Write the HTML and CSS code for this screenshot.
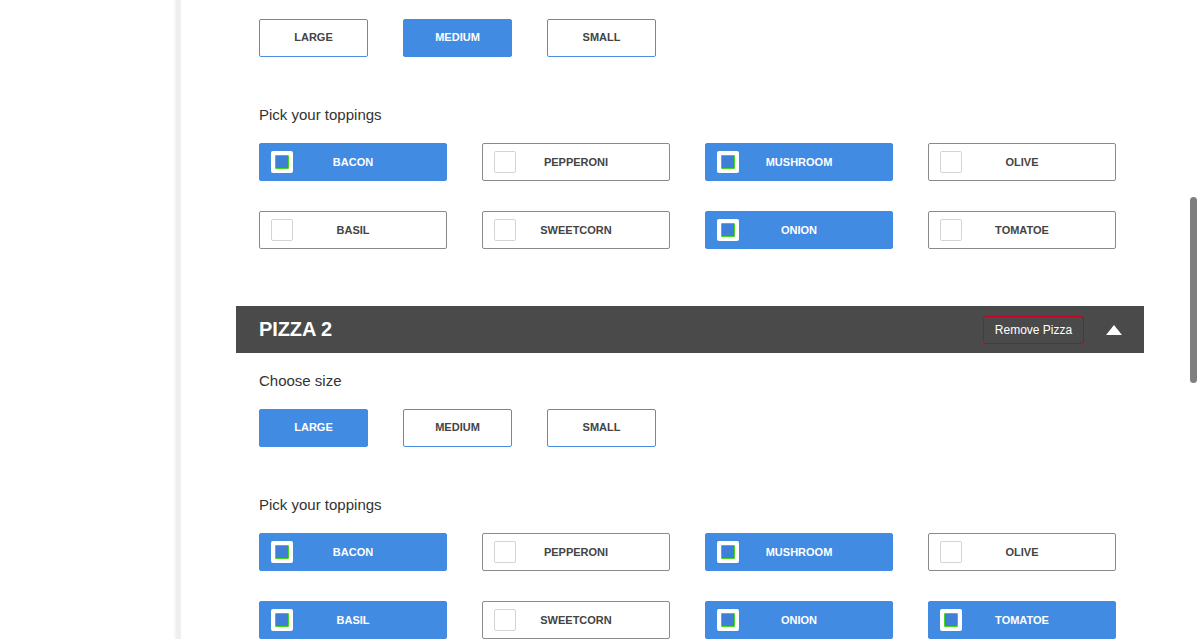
FILE: index.html
```html
<!DOCTYPE html>
<html>
<head>
<meta charset="utf-8">
<link rel="stylesheet" href="styles.css">
</head>
<body>
<div class="layout">
  <aside class="sidebar"></aside>
  <main class="main">
    <section class="pizza">
      <div class="body first">
        <div class="sizes">
          <button class="size">LARGE</button>
          <button class="size on">MEDIUM</button>
          <button class="size">SMALL</button>
        </div>
        <div class="label">Pick your toppings</div>
        <div class="toppings">
          <button class="top on"><span class="cb"></span><span class="tx">BACON</span></button>
          <button class="top"><span class="cb"></span><span class="tx">PEPPERONI</span></button>
          <button class="top on"><span class="cb"></span><span class="tx">MUSHROOM</span></button>
          <button class="top"><span class="cb"></span><span class="tx">OLIVE</span></button>
          <button class="top"><span class="cb"></span><span class="tx">BASIL</span></button>
          <button class="top"><span class="cb"></span><span class="tx">SWEETCORN</span></button>
          <button class="top on"><span class="cb"></span><span class="tx">ONION</span></button>
          <button class="top"><span class="cb"></span><span class="tx">TOMATOE</span></button>
        </div>
      </div>
    </section>
    <section class="pizza">
      <header class="head">
        <h2 class="title">PIZZA 2</h2>
        <button class="remove">Remove Pizza</button>
        <span class="caret"></span>
      </header>
      <div class="body">
        <div class="label size-label">Choose size</div>
        <div class="sizes">
          <button class="size on">LARGE</button>
          <button class="size">MEDIUM</button>
          <button class="size">SMALL</button>
        </div>
        <div class="label">Pick your toppings</div>
        <div class="toppings">
          <button class="top on"><span class="cb"></span><span class="tx">BACON</span></button>
          <button class="top"><span class="cb"></span><span class="tx">PEPPERONI</span></button>
          <button class="top on"><span class="cb"></span><span class="tx">MUSHROOM</span></button>
          <button class="top"><span class="cb"></span><span class="tx">OLIVE</span></button>
          <button class="top on"><span class="cb"></span><span class="tx">BASIL</span></button>
          <button class="top"><span class="cb"></span><span class="tx">SWEETCORN</span></button>
          <button class="top on"><span class="cb"></span><span class="tx">ONION</span></button>
          <button class="top on"><span class="cb"></span><span class="tx">TOMATOE</span></button>
        </div>
      </div>
    </section>
  </main>
</div>
<div class="scrollbar"></div>
</body>
</html>
```

FILE: styles.css
```css
html, body {
  margin: 0;
  padding: 0;
  background: #fff;
  height: 639px;
  overflow: hidden;
}
body {
  font-family: "Liberation Sans", Arial, Helvetica, sans-serif;
  color: #333;
}
.layout {
  display: flex;
  min-height: 639px;
}
.sidebar {
  width: 176px;
  flex: none;
  border-right: 5px solid #efefef;
  box-shadow: inset -2px 0 0 #f6f6f6;
}
.main {
  margin-left: 55px;
  width: 908px;
}
.body {
  padding: 0 28px 57px 23px;
}
.body.first {
  padding-top: 19px;
}
.sizes {
  display: flex;
  gap: 35px;
}
button {
  font-family: "Liberation Sans", Arial, Helvetica, sans-serif;
  cursor: pointer;
}
.size {
  width: 109px;
  height: 38px;
  border: 1px solid #4a8fe2;
  background: #fff;
  border-radius: 2px;
  font-size: 11px;
  font-weight: bold;
  color: #444;
  padding: 0 0 2px;
}
.size.on {
  background: #428be2;
  border-color: #428be2;
  color: #fff;
}
.label {
  font-size: 15px;
  color: #333;
  height: 16px;
  line-height: 16px;
  margin: 50px 0 20px;
}
.size-label {
  margin: 20px 0 20px;
}
.toppings {
  display: grid;
  grid-template-columns: repeat(4, 188px);
  column-gap: 35px;
  row-gap: 30px;
}
.top {
  height: 38px;
  padding: 0 11px 1px;
  border: 1px solid #8a8a8a;
  border-radius: 2px;
  background: #fff;
  display: grid;
  grid-template-columns: 22px 1fr 22px;
  align-items: center;
  font-size: 11px;
  font-weight: bold;
  color: #444;
}
.top .tx {
  text-align: center;
}
.cb {
  width: 22px;
  height: 22px;
  box-sizing: border-box;
  border: 1px solid #d4d4d4;
  border-radius: 2px;
  background: #fff;
  display: flex;
  align-items: center;
  justify-content: center;
}
.top.on {
  background: #428be2;
  border-color: #428be2;
  color: #fff;
}
.top.on .cb {
  border: none;
  border-radius: 2px;
}
.top.on .cb::after {
  content: "";
  width: 14px;
  height: 14px;
  box-sizing: border-box;
  background: #3f7fd8;
  border: 1px solid #44d81c;
  border-radius: 1px;
}
.head {
  height: 47px;
  background: #4a4a4a;
  display: flex;
  align-items: center;
  padding: 0 22px 0 23px;
}
.title {
  margin: 0;
  flex: 1;
  font-size: 20px;
  font-weight: bold;
  color: #fff;
  letter-spacing: -0.1px;
}
.remove {
  width: 101px;
  height: 28px;
  border: 1px solid #c8001f;
  border-radius: 3px;
  background: transparent;
  color: #fff;
  font-size: 12px;
  padding: 0;
  margin-right: 22px;
}
.caret {
  width: 0;
  height: 0;
  border-left: 8px solid transparent;
  border-right: 8px solid transparent;
  border-bottom: 10px solid #fff;
}
.scrollbar {
  position: fixed;
  left: 1190px;
  top: 197px;
  width: 7px;
  height: 186px;
  border-radius: 4px;
  background: #7f7f7f;
}
```
